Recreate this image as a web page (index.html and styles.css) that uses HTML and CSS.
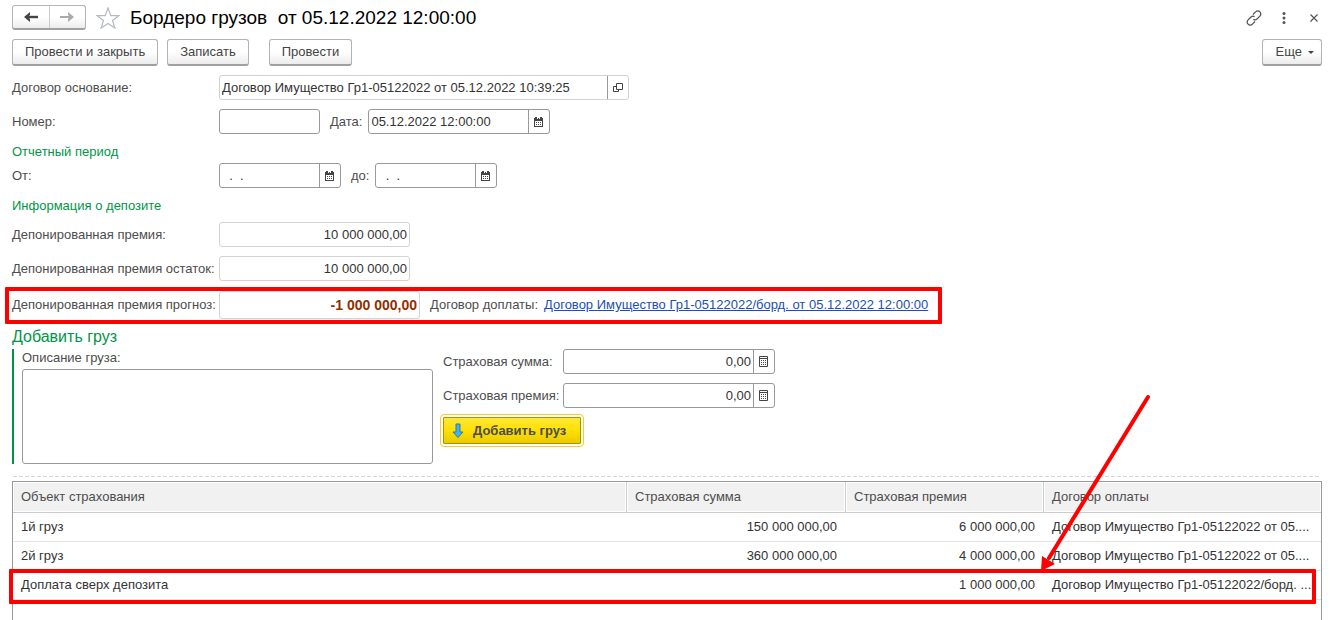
FILE: index.html
```html
<!DOCTYPE html>
<html lang="ru">
<head>
<meta charset="utf-8">
<title>Бордеро грузов</title>
<link rel="stylesheet" href="styles.css">
</head>
<body>
<svg class="defs" aria-hidden="true">
  <symbol id="calendar" viewBox="0 0 9 10">
    <path d="M0 1h9v9H0z" fill="#444"/>
    <path d="M1 0h2v1H1zM6 0h2v1H6z" fill="#444"/>
    <path d="M3 1h1v1H3zM5 1h1v1H5zM1 4h7v5H1z" fill="#fff"/>
    <path d="M2 5h1v1H2zM4 5h1v1H4zM6 5h1v1H6zM2 7h1v1H2zM4 7h1v1H4zM6 7h1v1H6z" fill="#444"/>
  </symbol>
  <symbol id="calculator" viewBox="0 0 9 11">
    <path d="M.5.5h8v10h-8z" fill="#fff" stroke="#444"/>
    <path d="M1 2h7v1H1zM2 4h1v1H2zM4 4h1v1H4zM6 4h1v1H6zM2 6h1v1H2zM4 6h1v1H4zM6 6h1v1H6zM2 8h1v1H2zM4 8h1v1H4zM6 8h1v1H6z" fill="#444"/>
  </symbol>
</svg>
<main class="page">
  <header class="titlebar">
    <div class="nav">
      <button class="nav-btn" type="button" aria-label="Назад"><svg width="14" height="10" viewBox="0 0 14 10"><path d="M14 5H3" stroke="#444" stroke-width="2.400"/><path d="M0 5l6-5v3L4 5l2 2v3z" fill="#444"/></svg></button>
      <button class="nav-btn" type="button" aria-label="Вперед"><svg width="14" height="10" viewBox="0 0 14 10"><path d="M0 5h11" stroke="#aaa" stroke-width="2"/><path d="M14 5L8 0v3l2 2-2 2v3z" fill="#aaa"/></svg></button>
    </div>
    <button class="icon-btn star" type="button" aria-label="Избранное"><svg width="24" height="22" viewBox="0 0 24 22"><path d="M12 1l2.800 7.600H23l-6.500 4.900 2.400 7.500L12 16.400 5.100 21l2.400-7.500L1 8.600h8.200z" fill="#fff" stroke="#b4bac0" stroke-width="1.200"/></svg></button>
    <h1 class="title">Бордеро грузов&nbsp; от 05.12.2022 12:00:00</h1>
    <div class="window-tools">
      <button class="icon-btn" type="button" aria-label="Ссылка"><svg width="16" height="16" viewBox="0 0 16 16" fill="none" stroke="#555" stroke-width="1.300"><path d="M7 4.500l2.600-2.600a2.900 2.900 0 0 1 4.300 0 2.900 2.900 0 0 1 0 4.200L11 9a2.900 2.900 0 0 1-3.600.4M9 11.500l-2.600 2.600a2.900 2.900 0 0 1-4.300 0 2.900 2.900 0 0 1 0-4.200L5 7a2.900 2.900 0 0 1 3.600-.4"/></svg></button>
      <button class="icon-btn" type="button" aria-label="Меню"><svg width="16" height="12" viewBox="0 0 16 12" fill="#555"><circle cx="8" cy="1.500" r="1.500"/><circle cx="8" cy="6" r="1.500"/><circle cx="8" cy="10.500" r="1.500"/></svg></button>
      <button class="icon-btn" type="button" aria-label="Закрыть"><svg width="16" height="8" viewBox="0 0 16 8"><path d="M4.500.5l7 7M11.500.5l-7 7" stroke="#555" stroke-width="1.200"/></svg></button>
    </div>
  </header>

  <div class="toolbar">
    <button class="btn" type="button">Провести и закрыть</button>
    <button class="btn" type="button">Записать</button>
    <button class="btn btn-apart" type="button">Провести</button>
    <button class="btn btn-more" type="button">Еще <span class="caret"></span></button>
  </div>

  <div class="row">
    <label class="label" for="base">Договор основание:</label>
    <div class="field field-base muted">
      <input id="base" type="text" readonly value="Договор Имущество Гр1-05122022 от 05.12.2022 10:39:25">
      <button class="field-btn" type="button" aria-label="Открыть"><svg width="10" height="10" viewBox="0 0 10 10" fill="none" stroke="#444"><path d="M3.500.5h6v6h-6zM3.500 3.500h-3v5h5v-2"/></svg></button>
    </div>
  </div>
  <div class="row">
    <label class="label" for="num">Номер:</label>
    <div class="field field-num"><input id="num" type="text"></div>
    <label class="label-inline" for="date">Дата:</label>
    <div class="field field-date">
      <input id="date" type="text" value="05.12.2022 12:00:00">
      <button class="field-btn" type="button" aria-label="Выбрать дату"><svg width="9" height="10"><use href="#calendar"/></svg></button>
    </div>
  </div>

  <h2 class="section">Отчетный период</h2>
  <div class="row">
    <label class="label" for="from">От:</label>
    <div class="field field-period">
      <input id="from" type="text" value="&nbsp;&nbsp;.&nbsp;&nbsp;.">
      <button class="field-btn" type="button" aria-label="Выбрать дату"><svg width="9" height="10"><use href="#calendar"/></svg></button>
    </div>
    <label class="label-inline" for="to">до:</label>
    <div class="field field-period">
      <input id="to" type="text" value="&nbsp;&nbsp;.&nbsp;&nbsp;.">
      <button class="field-btn" type="button" aria-label="Выбрать дату"><svg width="9" height="10"><use href="#calendar"/></svg></button>
    </div>
  </div>

  <h2 class="section">Информация о депозите</h2>
  <div class="row row-deposit">
    <label class="label" for="dep">Депонированная премия:</label>
    <div class="field field-sum muted"><input class="num" id="dep" type="text" readonly value="10 000 000,00"></div>
  </div>
  <div class="row">
    <label class="label" for="rest">Депонированная премия остаток:</label>
    <div class="field field-sum muted"><input class="num" id="rest" type="text" readonly value="10 000 000,00"></div>
  </div>
  <div class="row row-forecast">
    <label class="label" for="forecast">Депонированная премия прогноз:</label>
    <div class="field field-forecast muted"><input class="num negative" id="forecast" type="text" readonly value="-1 000 000,00"></div>
    <span class="label-inline">Договор доплаты:</span>
    <a class="link" href="#">Договор Имущество Гр1-05122022/борд. от 05.12.2022 12:00:00</a>
    <span class="mark"></span>
  </div>

  <h2 class="group-title">Добавить груз</h2>
  <section class="group">
    <div class="description">
      <label for="descr">Описание груза:</label>
      <textarea id="descr"></textarea>
    </div>
    <div class="sums">
      <div class="sum-row">
        <label class="sum-label" for="sum">Страховая сумма:</label>
        <div class="field field-calc"><input class="num" id="sum" type="text" value="0,00"><button class="field-btn" type="button" aria-label="Калькулятор"><svg width="9" height="11"><use href="#calculator"/></svg></button></div>
      </div>
      <div class="sum-row">
        <label class="sum-label" for="premium">Страховая премия:</label>
        <div class="field field-calc"><input class="num" id="premium" type="text" value="0,00"><button class="field-btn" type="button" aria-label="Калькулятор"><svg width="9" height="11"><use href="#calculator"/></svg></button></div>
      </div>
      <button class="add" type="button"><svg width="12" height="16" viewBox="0 0 12 16"><path d="M4 1h4v8h3L6 14.500 1 9h3z" fill="#3db4ee" stroke="#357a99"/></svg>Добавить груз</button>
    </div>
  </section>

  <div class="table-box">
    <table class="table">
      <colgroup><col><col class="col-sum"><col class="col-premium"><col class="col-contract"></colgroup>
      <thead>
        <tr><th>Объект страхования</th><th>Страховая сумма</th><th>Страховая премия</th><th>Договор оплаты</th></tr>
      </thead>
      <tbody>
        <tr><td>1й груз</td><td class="num">150 000 000,00</td><td class="num">6 000 000,00</td><td>Договор Имущество Гр1-05122022 от 05....</td></tr>
        <tr><td>2й груз</td><td class="num">360 000 000,00</td><td class="num">4 000 000,00</td><td>Договор Имущество Гр1-05122022 от 05....</td></tr>
        <tr class="extra"><td>Доплата сверх депозита<span class="mark mark-row"></span></td><td></td><td class="num">1 000 000,00</td><td>Договор Имущество Гр1-05122022/борд. ...</td></tr>
      </tbody>
    </table>
    <svg class="arrow" width="120" height="184" viewBox="0 0 120 184" aria-hidden="true"><path d="M112 6L13 167" fill="none" stroke="red" stroke-width="4" stroke-linecap="round"/><path d="M5 180l1-15 13 8z" fill="red"/></svg>
  </div>
</main>
</body>
</html>
```
FILE: styles.css
```css
* { box-sizing: border-box; }
body {
  margin: 0;
  overflow: hidden;
  background: #fff;
  color: #4d4d4d;
  font: 13px/16px "Liberation Sans", Arial, sans-serif;
}
.defs { position: absolute; width: 0; height: 0; }
button, input, textarea { font: inherit; color: inherit; margin: 0; }
svg { display: block; flex: none; }
.page { display: flex; flex-direction: column; height: 100vh; padding: 5px 12px 0; }
.page > * { flex: none; }

.titlebar { display: flex; align-items: center; height: 25px; }
.nav {
  display: flex;
  width: 74px;
  height: 25px;
  border: 1px solid #b3b3b3;
  border-bottom: 2px solid #a0a0a0;
  border-radius: 3px;
  background: linear-gradient(#fff 50%, #ececec);
}
.nav-btn { flex: 1; display: flex; align-items: center; justify-content: center; padding: 0; border: 0; background: none; }
.nav-btn + .nav-btn { border-left: 1px solid #ccc; }
.icon-btn { display: flex; align-items: center; justify-content: center; padding: 0; border: 0; background: none; }
.star { margin-left: 10px; }
.title { margin: 0 0 0 10px; color: #000; font-size: 19px; line-height: 24px; font-weight: 400; }
.window-tools { display: flex; align-items: center; gap: 14px; margin-left: auto; }

.toolbar { display: flex; gap: 9px; margin-top: 9px; }
.btn {
  height: 27px;
  padding: 0 12px;
  border: 1px solid #b3b3b3;
  border-bottom: 2px solid #a0a0a0;
  border-radius: 3px;
  background: linear-gradient(#fff 50%, #ececec);
  color: #444;
  white-space: nowrap;
}
.btn-apart { margin-left: 11px; }
.btn-more { display: flex; align-items: center; gap: 6px; margin-left: auto; padding: 0 7px 0 13px; }
.caret { border: 3px solid transparent; border-top-color: #444; border-bottom: 0; }

.row { position: relative; display: flex; align-items: center; margin-top: 9px; }
.label { width: 207px; white-space: nowrap; }
.label-inline { margin: 0 6px 0 10px; white-space: nowrap; }
.field {
  display: flex;
  height: 25px;
  border: 1px solid #999;
  border-radius: 3px;
  background: #fff;
  color: #333;
}
.muted { border-color: #d3d3d3; }
.field input { flex: 1; min-width: 0; padding: 0 2px; border: 0; background: none; outline: 0; }
.field-btn {
  flex: none;
  display: flex;
  align-items: center;
  justify-content: center;
  width: 21px;
  padding: 0 1px 0 0;
  border: 0;
  border-left: 1px solid #999;
  background: none;
}
.num { text-align: right; }
.field-base { width: 410px; }
.field-num { width: 101px; }
.field-date { width: 182px; }
.field-period { width: 122px; }
.field-sum { width: 191px; }
.field-forecast { width: 201px; height: 28px; }
.field .negative { color: #8f2f00; font-size: 14px; font-weight: 700; }
.section { margin: 10px 0 0; color: #009646; font-size: 13px; line-height: 16px; font-weight: 400; }
.section + .row { margin-top: 3px; }
.section + .row-deposit { margin-top: 8px; }
.row-forecast { margin-top: 10px; }
.link { color: #1a4fb4; text-decoration: underline; white-space: nowrap; }
.mark { position: absolute; inset: -4px auto -5px -7px; width: 937px; border: 4px solid red; border-radius: 1px; pointer-events: none; }

.group-title { margin: 8px 0 0; color: #009646; font-size: 16px; line-height: 20px; font-weight: 400; }
.group { display: flex; gap: 10px; margin-top: 2px; padding-left: 8px; border-left: 2px solid #009646; }
.description { display: flex; flex-direction: column; gap: 3px; width: 411px; padding-top: 1px; }
.description textarea { height: 95px; border: 1px solid #999; border-radius: 3px; resize: none; outline: 0; }
.sums { display: flex; flex-direction: column; align-items: flex-start; gap: 9px; }
.sum-row { display: flex; align-items: center; }
.sum-label { width: 120px; white-space: nowrap; }
.field-calc { width: 212px; }
.add {
  display: flex;
  align-items: center;
  gap: 9px;
  height: 27px;
  padding: 0 14px 0 8px;
  border: 1px solid #a89400;
  border-radius: 1px;
  outline: 1px solid #ffc91f;
  outline-offset: 2px;
  background: linear-gradient(#ffe838, #ffe000 50%, #e8cb00);
  font-weight: 700;
}

.table-box { position: relative; margin-top: 17px; border: 1px solid #999; border-bottom: 0; }
.page > .table-box { flex: 1; }
.table-box::before {
  content: "";
  position: absolute;
  inset: -6px 0 auto;
  height: 1px;
  background: repeating-linear-gradient(90deg, #d5d5d5 0 4px, transparent 4px 6px);
}
.table { width: 100%; table-layout: fixed; border-collapse: separate; border-spacing: 0; }
.col-sum { width: 219px; }
.col-premium { width: 198px; }
.col-contract { width: 278px; }
.table th {
  height: 31px;
  padding: 0 8px;
  border-bottom: 1px solid #ccc;
  background: #f1f1f1;
  box-shadow: inset 0 0 0 1px #fff;
  font-weight: 400;
  text-align: left;
}
.table th + th { border-left: 1px solid #ccc; }
.table td { height: 29px; padding: 0 8px; border-bottom: 1px solid #e3e3e3; color: #333; white-space: nowrap; }
.table td + td { padding-left: 9px; }
.extra { position: relative; }
.mark-row { inset: -2px 5px -4px -4px; width: auto; }
.arrow { position: absolute; top: -91px; right: 165px; }
```
